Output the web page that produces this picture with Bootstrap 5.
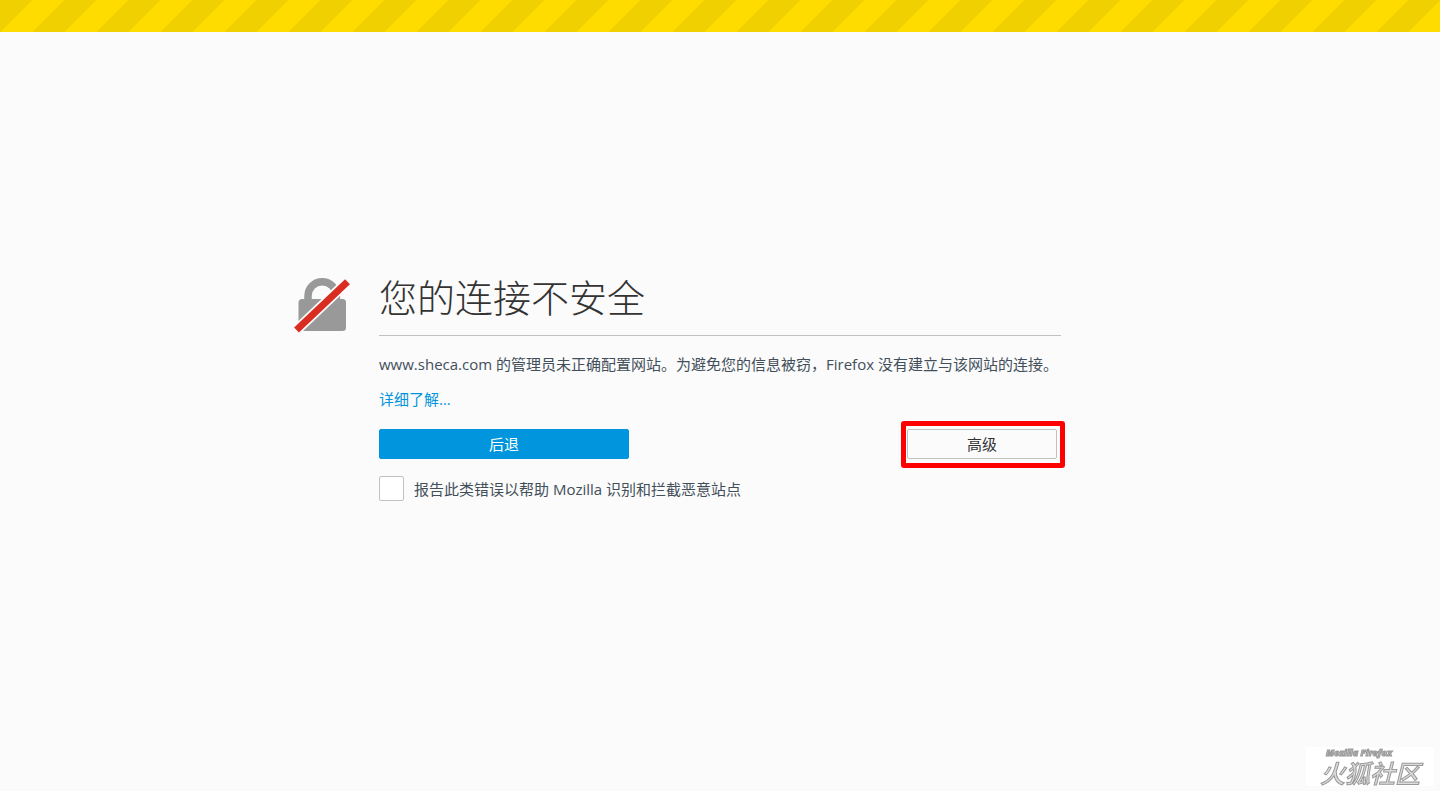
<!DOCTYPE html>
<html lang="zh-CN">
<head>
<meta charset="utf-8">
<meta name="viewport" content="width=device-width, initial-scale=1">
<title>不安全的连接</title>
<link href="https://cdn.jsdelivr.net/npm/bootstrap@5.3.0/dist/css/bootstrap.min.css" rel="stylesheet">
<style>
  body {
    background: #fbfbfb;
    color: #424f5a;
    font-family: "Open Sans", "Noto Sans CJK SC", sans-serif;
    font-size: 15px;
    line-height: 20px;
  }
  .caution-stripes {
    height: 32px;
    background: linear-gradient(135deg, #f0d000 25%, #fedc00 25% 50%, #f0d000 50% 75%, #fedc00 75%) 0 0 / 64px 64px;
  }
  .error-page { padding-bottom: 46px; }
  .error-box { max-width: 852px; padding-right: 85px; }
  .error-icon { width: 85px; }
  .error-title {
    color: #333;
    font-size: 38px;
    font-weight: 300;
    line-height: 42px;
    padding-bottom: 17px;
    margin-bottom: 18px;
    border-bottom: 1px solid #c1c1c1;
  }
  .learn-more { margin: 15px 0 20px; }
  .learn-link { color: #0095dd; text-decoration: none; }
  .error-btn {
    --bs-btn-font-size: 15px;
    --bs-btn-line-height: 20px;
    --bs-btn-padding-y: 4px;
    --bs-btn-border-radius: 2px;
    width: 150px;
  }
  .back-btn {
    --bs-btn-color: #fff;
    --bs-btn-bg: #0095dd;
    --bs-btn-border-color: #0095dd;
    --bs-btn-hover-color: #fff;
    --bs-btn-hover-bg: #008acb;
    width: 250px;
  }
  .advanced-btn {
    --bs-btn-color: #333;
    --bs-btn-bg: #fbfbfb;
    --bs-btn-border-color: #c1c1c1;
    --bs-btn-hover-bg: #ebebeb;
  }
  .highlight-frame {
    inset: -8px -8px -9px -6px;
    border: 5px solid #f00;
    border-radius: 3px;
  }
  .report-row { margin-top: 17px; gap: 10px; }
  .report-check.form-check-input {
    width: 25px;
    height: 25px;
    border: 1px solid #c1c1c1;
    border-radius: 2px;
  }
  .community-mark {
    right: 6px;
    bottom: 5px;
    width: 128px;
    height: 39px;
    padding-left: 14px;
    background: #fff;
    color: #ddd;
    font-style: italic;
    -webkit-text-stroke: 1px #999;
  }
  .mark-en { font-size: 9px; line-height: 12px; font-weight: 800; padding-left: 6px; color: #bbb; }
  .mark-zh { font-size: 25px; line-height: 28px; font-weight: 500; }
</style>
</head>
<body>
<div class="d-flex flex-column min-vh-100">
  <div class="caution-stripes"></div>
  <main class="error-page flex-grow-1 d-flex align-items-center justify-content-center">
    <div class="error-box d-flex w-100">
      <div class="error-icon flex-shrink-0">
        <svg width="58" height="58" viewBox="0 0 58 58" aria-hidden="true">
          <path d="M14 26V20a14.200 14.200 0 0 1 28.400 0V26" fill="none" stroke="#999" stroke-width="7.500"/>
          <rect x="4.500" y="23" width="47.500" height="32" rx="3.500" fill="#999"/>
          <path d="M0 56.400L56 3.200" stroke="#fbfbfb" stroke-width="10.500"/>
          <path d="M2.500 54L53.500 5.700" stroke="#d92d21" stroke-width="7"/>
        </svg>
      </div>
      <div class="flex-grow-1">
        <h1 class="error-title">您的连接不安全</h1>
        <p class="mb-0">www.sheca.com 的管理员未正确配置网站。为避免您的信息被窃，Firefox 没有建立与该网站的连接。</p>
        <p class="learn-more"><a class="learn-link" href="#">详细了解…</a></p>
        <div class="d-flex justify-content-between pe-1">
          <button type="button" class="btn error-btn back-btn">后退</button>
          <div class="position-relative">
            <button type="button" class="btn error-btn advanced-btn">高级</button>
            <div class="highlight-frame position-absolute pe-none"></div>
          </div>
        </div>
        <div class="report-row d-flex align-items-center">
          <input class="form-check-input report-check m-0" type="checkbox" id="report">
          <label for="report">报告此类错误以帮助 Mozilla 识别和拦截恶意站点</label>
        </div>
      </div>
    </div>
  </main>
</div>
<div class="community-mark position-fixed">
  <div class="mark-en">Mozilla Firefox</div>
  <div class="mark-zh">火狐社区</div>
</div>
<script src="https://cdn.jsdelivr.net/npm/bootstrap@5.3.0/dist/js/bootstrap.bundle.min.js"></script>
</body>
</html>
